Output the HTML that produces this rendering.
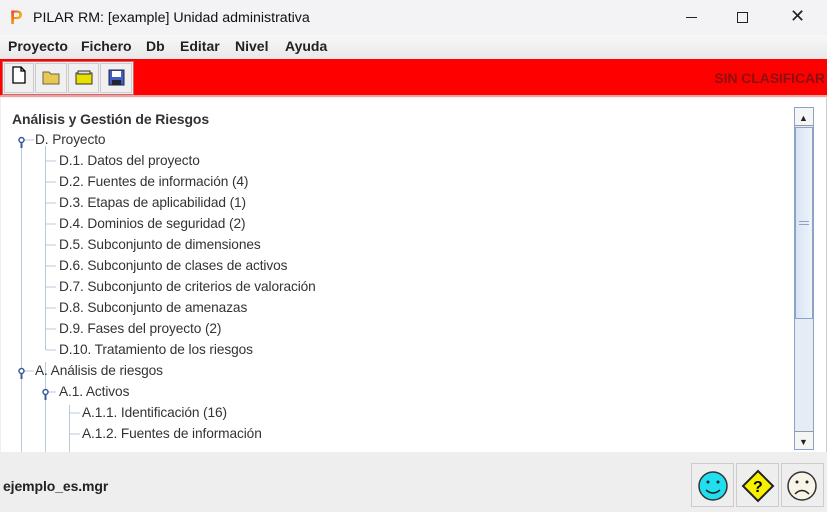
<!DOCTYPE html>
<html><head><meta charset="utf-8"><style>
*{margin:0;padding:0;box-sizing:border-box}
body{width:827px;height:512px;overflow:hidden;background:#eeeeee;font-family:"Liberation Sans",sans-serif;position:relative}
.a{position:absolute}
.t{position:absolute;font-size:13.7px;color:#333;white-space:nowrap;line-height:16px;letter-spacing:-0.1px}
.m{position:absolute;top:38px;font-size:14px;font-weight:bold;color:#222;line-height:16px}
</style></head><body>
<div class="a" style="left:0;top:0;width:827px;height:35px;background:#f3f3f5"></div>
<svg class="a" style="left:8px;top:6px" width="20" height="22"><defs><linearGradient id="g" x1="0" y1="0" x2="1" y2="1"><stop offset="0" stop-color="#e02020"/><stop offset=".5" stop-color="#f0a020"/><stop offset="1" stop-color="#e8e020"/></linearGradient></defs><text x="2" y="18" font-family="Liberation Sans" font-weight="bold" font-size="19" fill="url(#g)">P</text></svg>
<div class="t" style="left:33px;top:10px;font-size:14.2px;color:#111;letter-spacing:0">PILAR RM: [example] Unidad administrativa</div>
<div class="a" style="left:686px;top:17px;width:11px;height:1px;background:#222"></div>
<div class="a" style="left:737px;top:12px;width:11px;height:11px;border:1px solid #222"></div>
<div class="t" style="left:790px;top:8px;font-size:18px;color:#222">✕</div>
<div class="a" style="left:0;top:35px;width:827px;height:24px;background:linear-gradient(#f8f8f8,#e8e8e8)"></div>
<div class="m" style="left:8px">Proyecto</div>
<div class="m" style="left:81px">Fichero</div>
<div class="m" style="left:146px">Db</div>
<div class="m" style="left:180px">Editar</div>
<div class="m" style="left:235px">Nivel</div>
<div class="m" style="left:285px">Ayuda</div>
<div class="a" style="left:0;top:59px;width:827px;height:38px;background:#ff0000;border-bottom:2px solid #f4a0a0"></div>
<div class="a" style="left:2px;top:61px;width:132px;height:34px;background:#eeeeee;border:1px solid #c66"></div>
<div class="a" style="left:4px;top:63px;width:30px;height:30px;border:1px solid #ccc;background:#f0f0f0"></div>
<div class="a" style="left:35px;top:63px;width:32px;height:30px;border:1px solid #ccc;background:#f0f0f0"></div>
<div class="a" style="left:68px;top:63px;width:31px;height:30px;border:1px solid #ccc;background:#f0f0f0"></div>
<div class="a" style="left:100px;top:63px;width:32px;height:30px;border:1px solid #ccc;background:#f0f0f0"></div>
<svg class="a" style="left:0;top:59px" width="140" height="38">
<path d="M13 8h8l4 4v12h-12z M21 8v4h4" fill="#fff" stroke="#000" stroke-width="1.3"/>
<path d="M43 13h6l2 2h8v10h-16z" fill="#e8c850" stroke="#665" stroke-width="1"/>
<path d="M76 14h16v11h-16z" fill="#e8e000" stroke="#333"/><path d="M78 12h12v3h-12z" fill="#ddd" stroke="#333"/>
<rect x="109" y="11" width="15" height="15" fill="#4060c0" stroke="#224"/><rect x="112" y="12" width="9" height="6" fill="#fff"/><rect x="112" y="21" width="9" height="5" fill="#223"/>
</svg>
<div class="t" style="right:2px;top:70px;font-weight:bold;color:#8b1010;font-size:14px">SIN CLASIFICAR</div>
<div class="a" style="left:1px;top:98px;width:826px;height:354px;background:#fff;border-right:1px solid #ccc"></div>
<div class="a" style="left:794px;top:107px;width:20px;height:343px;background:#e6ecf5;border:1px solid #8aa4c8"></div>
<div class="a" style="left:795px;top:108px;width:18px;height:18px;background:#f5f5f5;border-bottom:1px solid #999"></div>
<div class="t" style="left:799px;top:110px;font-size:9px;color:#222">▲</div>
<div class="a" style="left:795px;top:127px;width:18px;height:192px;background:linear-gradient(90deg,#d8e4f4,#eef3fa);border:1px solid #8aa4c8"></div>
<div class="a" style="left:799px;top:221px;width:10px;height:4px;border-top:1px solid #8aa4c8;border-bottom:1px solid #8aa4c8"></div>
<div class="a" style="left:795px;top:431px;width:18px;height:18px;background:#f5f5f5;border-top:1px solid #999"></div>
<div class="t" style="left:799px;top:434px;font-size:9px;color:#222">▼</div>
<div class="t" style="left:12px;top:111px;font-weight:bold;color:#333;font-size:14px">Análisis y Gestión de Riesgos</div>
<svg class="a" style="left:0;top:98px" width="300" height="354">
<g stroke="#b8c8e0" stroke-width="1" fill="none">
<path d="M21.5 48v306 M45.5 48v204 M45.5 264v90 M69.5 307v47"/>
<path d="M24 42h10 M46 63h10 M46 84h10 M46 105h10 M46 126h10 M46 147h10 M46 168h10 M46 189h10 M46 210h10 M46 231h10 M46 252h10 M24 273h10 M48 294h8 M70 315h10 M70 336h10"/>
</g>
<g fill="#fff" stroke="#3a5a9a" stroke-width="1.5"><circle cx="21.5" cy="42" r="2.5"/><circle cx="21.5" cy="273" r="2.5"/><circle cx="45.5" cy="294" r="2.5"/></g>
<g stroke="#3a5a9a" stroke-width="2"><path d="M21.5 45v5 M21.5 276v5 M45.5 297v5"/></g>
</svg>
<div class="t" style="left:35px;top:132px">D. Proyecto</div>
<div class="t" style="left:59px;top:153px">D.1. Datos del proyecto</div>
<div class="t" style="left:59px;top:174px">D.2. Fuentes de información (4)</div>
<div class="t" style="left:59px;top:195px">D.3. Etapas de aplicabilidad (1)</div>
<div class="t" style="left:59px;top:216px">D.4. Dominios de seguridad (2)</div>
<div class="t" style="left:59px;top:237px">D.5. Subconjunto de dimensiones</div>
<div class="t" style="left:59px;top:258px">D.6. Subconjunto de clases de activos</div>
<div class="t" style="left:59px;top:279px">D.7. Subconjunto de criterios de valoración</div>
<div class="t" style="left:59px;top:300px">D.8. Subconjunto de amenazas</div>
<div class="t" style="left:59px;top:321px">D.9. Fases del proyecto (2)</div>
<div class="t" style="left:59px;top:342px">D.10. Tratamiento de los riesgos</div>
<div class="t" style="left:35px;top:363px">A. Análisis de riesgos</div>
<div class="t" style="left:59px;top:384px">A.1. Activos</div>
<div class="t" style="left:82px;top:405px">A.1.1. Identificación (16)</div>
<div class="t" style="left:82px;top:426px">A.1.2. Fuentes de información</div>
<div class="t" style="left:3px;top:478px;font-weight:bold;color:#222;font-size:14px">ejemplo_es.mgr</div>
<div class="a" style="left:691px;top:463px;width:43px;height:44px;background:#eee;border:1px solid #ccc"></div>
<div class="a" style="left:736px;top:463px;width:43px;height:44px;background:#eee;border:1px solid #ccc"></div>
<div class="a" style="left:781px;top:463px;width:43px;height:44px;background:#eee;border:1px solid #ccc"></div>
<svg class="a" style="left:680px;top:455px" width="147" height="57">
<circle cx="33" cy="31" r="14" fill="#20e0f0" stroke="#333" stroke-width="1.5"/><circle cx="28" cy="27" r="1.5" fill="#222"/><circle cx="38" cy="27" r="1.5" fill="#222"/><path d="M26 35q7 6 14 0" fill="none" stroke="#222" stroke-width="1.5"/>
<path d="M78 16l15 15-15 15-15-15z" fill="#f8f000" stroke="#222" stroke-width="2"/><text x="73" y="37" font-family="Liberation Sans" font-weight="bold" font-size="16" fill="#000">?</text>
<circle cx="122" cy="31" r="14" fill="#f8f4e8" stroke="#333" stroke-width="1.5"/><circle cx="117" cy="27" r="1.5" fill="#222"/><circle cx="127" cy="27" r="1.5" fill="#222"/><path d="M115 39q7 -7 14 0" fill="none" stroke="#222" stroke-width="1.5"/>
</svg>
</body></html>
